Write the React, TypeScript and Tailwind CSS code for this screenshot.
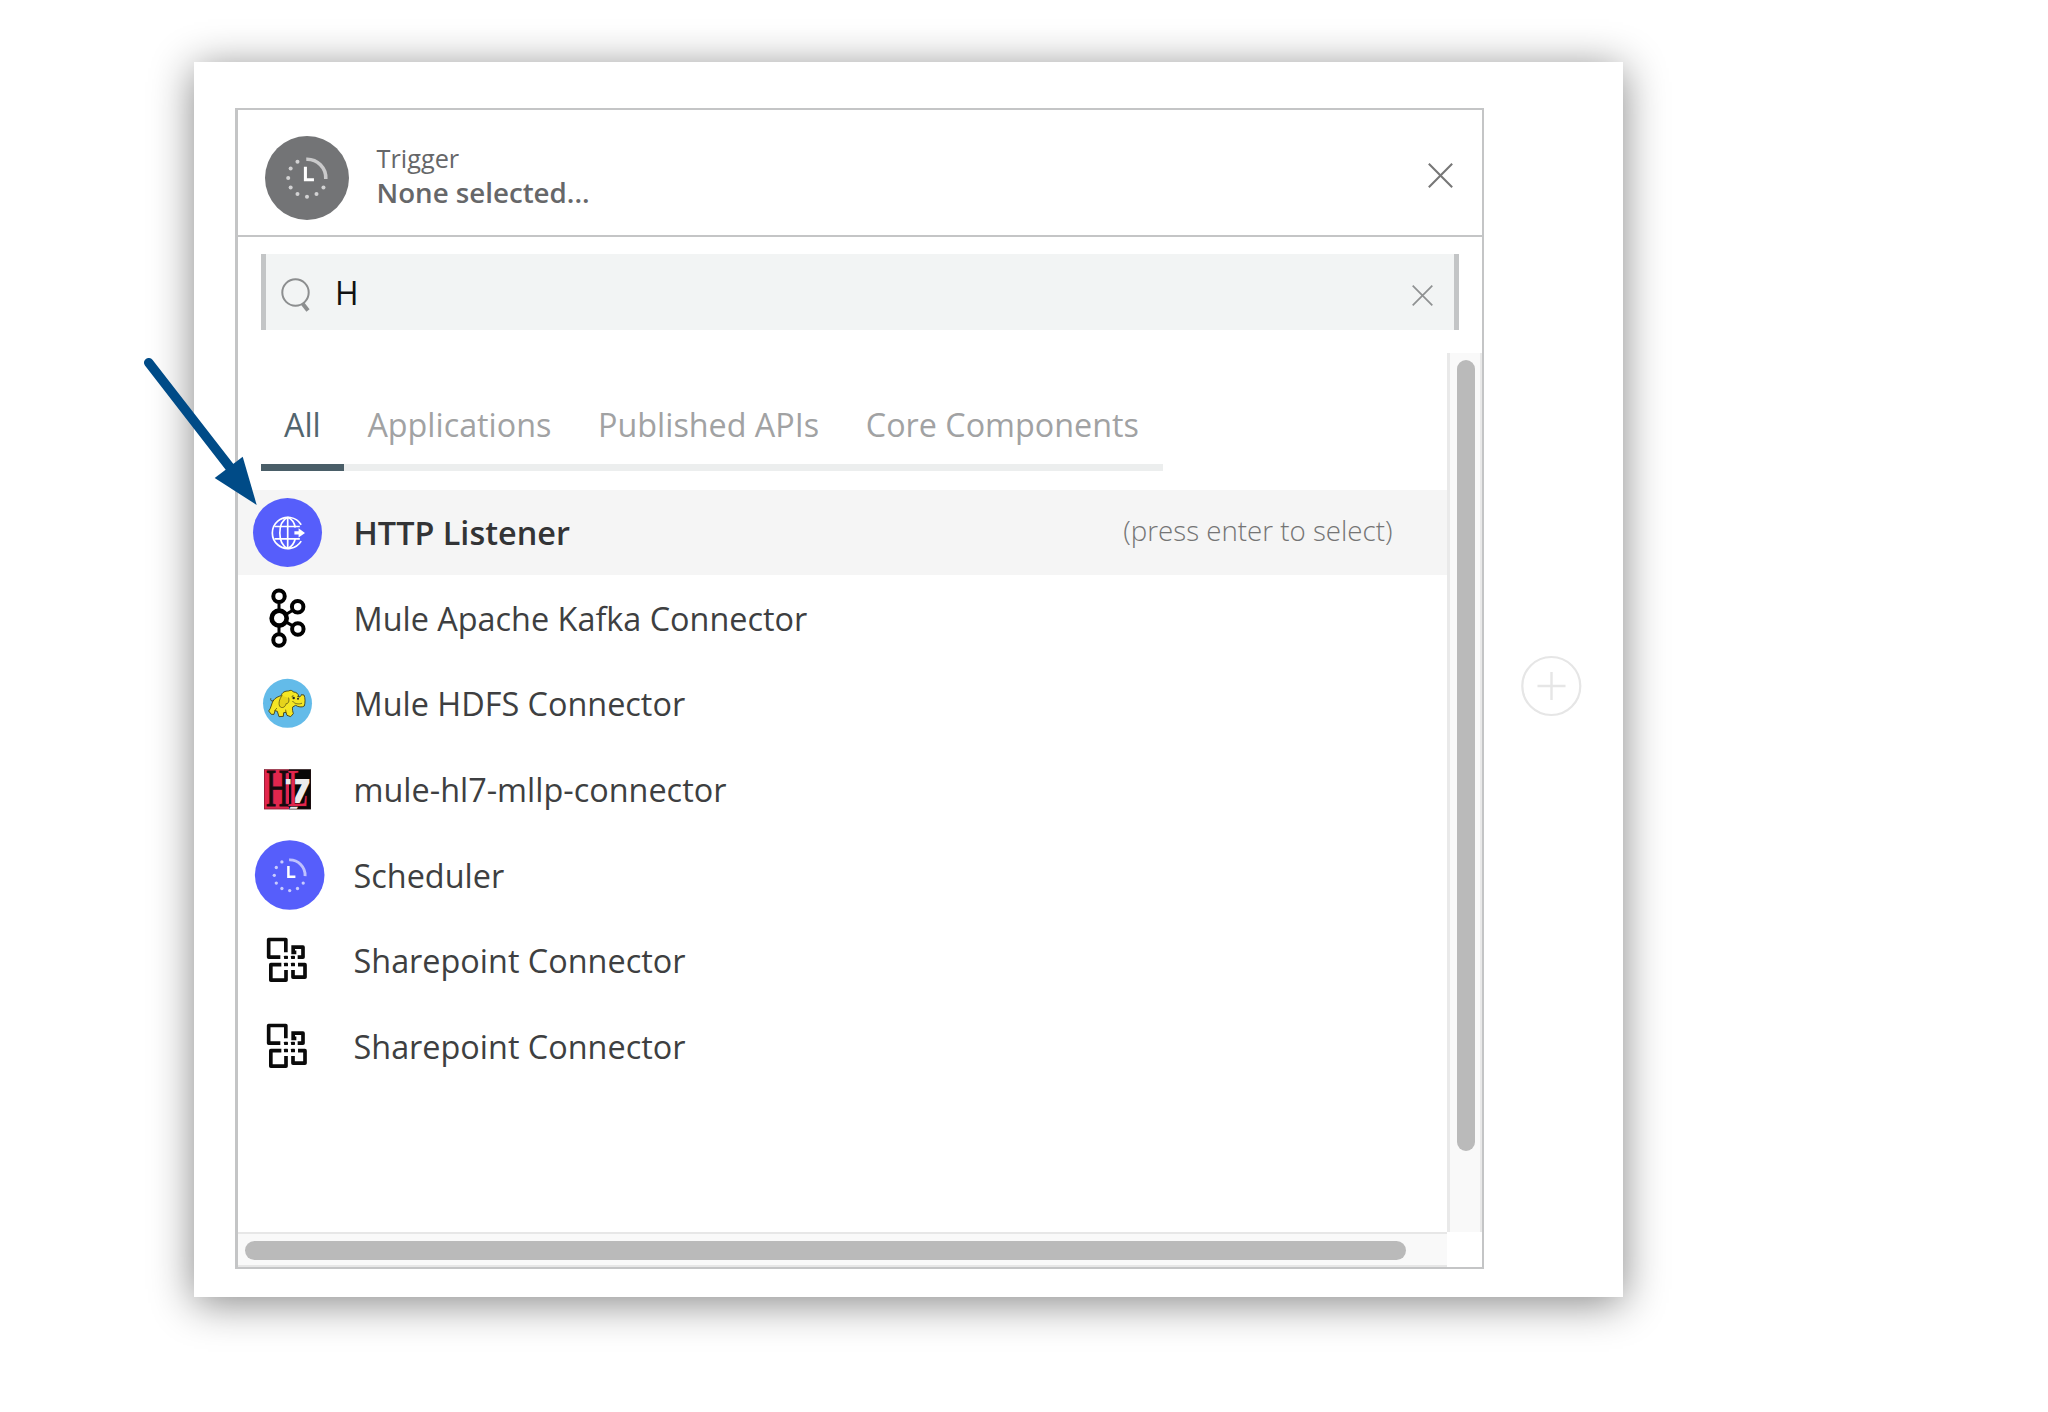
import type { ReactNode } from "react";

function CloseIcon({ size, className }: { size: number; className: string }) {
  return (
    <svg width={size} height={size} viewBox="0 0 24 24" fill="none" stroke="currentColor" className={className}>
      <path d="M0.8 0.8 23.2 23.2M23.2 0.8 0.8 23.2" strokeWidth="2" />
    </svg>
  );
}

// 12 o'clock to 3 o'clock is a solid arc, the other hours are dots.
const HOUR_DOTS = [
  [13.5, 7.8], [7.8, 13.2], [0, 15.3], [-7.8, 13.2], [-13.4, 7.8], [-15.4, 0], [-13.4, -7.8], [-7.8, -13.4],
];

function ClockGlyph({ cx, cy, scale }: { cx: number; cy: number; scale: number }) {
  return (
    <g transform={`translate(${cx} ${cy}) scale(${scale})`}>
      <path d="M-0.6 -15.4A15.4 15.4 0 0 1 15.4 0.8" fill="none" stroke="#fff" strokeOpacity="0.62" strokeWidth="2.9" />
      {HOUR_DOTS.map(([x, y]) => (
        <circle key={`${x}:${y}`} cx={x} cy={y} r="1.65" fill="#fff" fillOpacity="0.68" />
      ))}
      <path d="M-1.3 -9.3V1.4H5.7" fill="none" stroke="#fff" strokeWidth="2.5" />
    </g>
  );
}

function HttpIcon() {
  return (
    <svg width="80" height="80" viewBox="0 0 80 80" fill="none">
      <g transform="translate(0 -0.5)">
        <circle cx="39.5" cy="40" r="34.5" fill="#565efb" />
        <g stroke="#fff" strokeWidth="1.7">
          <path d="M53.2 32.2A15.6 15.6 0 1 0 53.2 48.6" />
          <path d="M39.7 24.6V56.2M26.5 34H51.8M26.5 46.4H51.8" />
          <path d="M39.7 24.8C29.2 30 29.2 51 39.7 56M39.7 24.8C43.8 26.6 46.4 30.6 47.3 35M47.3 46C46.4 50.4 43.8 54.2 39.7 56" />
        </g>
        <path d="M46.4 38.8H50.6V35.8L57 40.4 50.6 45V42H46.4Z" fill="#fff" />
      </g>
    </svg>
  );
}

function KafkaIcon() {
  return (
    <svg width="80" height="80" viewBox="0 0 80 80" fill="none">
      <g transform="translate(-8 -8) scale(0.33333)" stroke="#000">
        <path d="M117 100V118M117 168V190M140 132 156 122M140 157 156 166" strokeWidth="9" />
        <g strokeWidth="12">
          <circle cx="117" cy="78.5" r="17.2" />
          <circle cx="117" cy="210" r="17.2" />
          <circle cx="173" cy="110.5" r="17.2" />
          <circle cx="173.500" cy="177" r="17.2" />
        </g>
        <circle cx="117.5" cy="144.500" r="22.5" strokeWidth="14" />
      </g>
    </svg>
  );
}

function HdfsIcon() {
  return (
    <svg width="80" height="80" viewBox="0 0 80 80" fill="none">
      <g transform="translate(-8 -93) scale(0.33333)">
        <circle cx="142.500" cy="400" r="73.5" fill="#63bbe9" />
        <g stroke="#3d3a12" strokeWidth="2.6" strokeLinejoin="round" strokeLinecap="round">
          <path d="M102 394C96 396 90 391 92 386" />
          <path
            d="M100 391C106 383 116 379 124 377C126 366 136 363 145 363C153 359 158 362 160 366C169 366 175 371 176 379C180 382 183 379 184 374L192 375C196 383 196 398 193 408C186 413 174 411 167 406L158 411C156 419 159 425 160 431L152 440L141 436L138 427L131 428L130 439L117 440L112 424L105 422L102 433L94 433L86 423C93 416 94 401 100 391Z"
            fill="#f5e624"
          />
          <path d="M126 377C117 387 114 405 121 411C129 416 137 409 138 401C145 402 149 393 146 384" fill="#e6d31c" strokeWidth="2" />
          <path d="M158 394C164 402 176 404 185 400M104 422 110 415M138 427 137 420" strokeWidth="2" />
        </g>
        <path d="M155 380 160 377M172 379 178 381" stroke="#222" strokeWidth="2.5" />
        <circle cx="161" cy="384" r="3.6" fill="#222" />
        <circle cx="174" cy="386" r="3" fill="#222" />
      </g>
    </svg>
  );
}

function Hl7Icon() {
  return (
    <svg width="80" height="80" viewBox="0 0 80 80">
      <g transform="translate(-8 1.3) scale(0.33333)">
        <rect x="72" y="57" width="76" height="120" fill="#e2264d" />
        <rect x="147" y="57" width="66" height="120" fill="#080808" />
        <text transform="translate(133 176) scale(1.15 1)" fontFamily="Open Sans, sans-serif" fontWeight="700" fontSize="121" fill="#ececec">7</text>
        <text transform="translate(78 168) scale(0.6 1)" fontFamily="Liberation Serif, serif" fontSize="158" fill="#160a0d" stroke="#160a0d" strokeWidth="3">H</text>
        <text transform="translate(142 168) scale(0.66 1)" fontFamily="Liberation Serif, serif" fontSize="158" fill="#e2264d" stroke="#2a0a12" strokeWidth="5" paintOrder="stroke">L</text>
        <rect x="73" y="58" width="139" height="118" fill="none" stroke="#3a1a20" strokeWidth="2" strokeOpacity="0.6" />
      </g>
    </svg>
  );
}

function SchedulerIcon() {
  return (
    <svg width="80" height="80" viewBox="0 0 80 80">
      <circle cx="41.7" cy="40" r="34.8" fill="#565efb" />
      <ClockGlyph cx={41.7} cy={40.300} scale={1} />
    </svg>
  );
}

function SharepointIcon() {
  return (
    <svg width="80" height="80" viewBox="0 0 80 80" fill="none">
      <g transform="translate(-8 0) scale(0.33333)">
        <g stroke="#0a0a0a" strokeWidth="11" strokeLinejoin="round">
          <path d="M121 111.500H86V58.500H137.500V97" />
          <path d="M154 81.500H189V111.500H173M159.500 81.500V98M154 97H169" />
          <path d="M124 134H92.500V180.500H138V150" />
          <path d="M159 150V171.500H195V134H174" />
        </g>
        <g fill="#0a0a0a">
          <rect x="132" y="107" width="12" height="10" rx="2" />
          <rect x="153" y="107" width="12" height="10" rx="2" />
          <rect x="132" y="128" width="12" height="11" rx="2" />
          <rect x="153" y="128" width="12" height="11" rx="2" />
        </g>
      </g>
    </svg>
  );
}

const TABS = ["All", "Applications", "Published APIs", "Core Components"];

const RESULTS: { name: string; icon: ReactNode }[] = [
  { name: "HTTP Listener", icon: <HttpIcon /> },
  { name: "Mule Apache Kafka Connector", icon: <KafkaIcon /> },
  { name: "Mule HDFS Connector", icon: <HdfsIcon /> },
  { name: "mule-hl7-mllp-connector", icon: <Hl7Icon /> },
  { name: "Scheduler", icon: <SchedulerIcon /> },
  { name: "Sharepoint Connector", icon: <SharepointIcon /> },
  { name: "Sharepoint Connector", icon: <SharepointIcon /> },
];

function ResultRow({ name, icon, active }: { name: string; icon: ReactNode; active: boolean }) {
  return (
    <li className={`flex items-center pl-[10px] pr-[54.500px] ${active ? "h-[85px] bg-[#f5f5f5]" : "h-[85.6px]"}`}>
      <span className="shrink-0">{icon}</span>
      <span
        className={`ml-[25.500px] grow whitespace-nowrap text-[32.4px] leading-10 ${
          active ? "pb-px font-semibold text-[#333436]" : "text-[#3e3f41]"
        }`}
      >
        {name}
      </span>
      {active && (
        <span className="whitespace-nowrap pb-[6px] text-[27.7px] font-light leading-10 text-[#747474]">
          (press enter to select)
        </span>
      )}
    </li>
  );
}

function TriggerPanel() {
  return (
    <section className="ml-[41px] mt-[46px] flex h-[1161px] w-[1249px] shrink-0 flex-col border-2 border-l-[3px] border-[#c4c5c6]">
      <header className="flex h-[127px] shrink-0 items-center border-b-2 border-[#c4c5c6] pl-[27px] pr-[29px]">
        <svg width="84" height="84" viewBox="0 0 84 84" className="mt-[10px]">
          <circle cx="42" cy="42" r="42" fill="#737476" />
          <ClockGlyph cx={42} cy={42} scale={1.22} />
        </svg>
        <div className="ml-[27.500px] mt-1 grow text-[#666769]">
          <div className="text-[25.300px] leading-[34px]">Trigger</div>
          <div className="text-[27.700px] font-semibold leading-[34px]">None selected...</div>
        </div>
        <CloseIcon size={25} className="mt-[5px] text-[#777]" />
      </header>

      <div className="ml-[23px] mt-[17px] flex h-[76px] w-[1198px] shrink-0 items-center border-x-[5px] border-[#c3c5c6] bg-[#f2f4f4] pl-[15px] pr-[21px]">
        <svg width="30" height="34" viewBox="0 0 30 34" fill="none" stroke="#8c8e8f" className="mt-[6px]">
          <circle cx="14.500" cy="14.500" r="13.2" strokeWidth="2" />
          <path d="M21.5 25.5 27 32.500" strokeWidth="4" />
        </svg>
        <span className="ml-6 grow pt-[2px] text-[32px] leading-10 text-[#111]">H</span>
        <CloseIcon size={21} className="mt-1.5 text-[#8f9192]" />
      </div>

      <div className="mt-[23px] flex grow">
        <div className="flex w-[1209px] flex-col">
          <nav className="ml-[23px] mt-[43px] flex w-[902px]">
            {TABS.map((tab, i) => (
              <span
                key={tab}
                className={`h-[75px] whitespace-nowrap border-b-[7px] pl-[23px] pr-[23.700px] pt-[8px] text-[32.300px] leading-10 ${
                  i === 0 ? "border-[#4a5e68] text-[#52656e]" : "border-[#eceeee] text-[#a1a2a3]"
                }`}
              >
                {tab}
              </span>
            ))}
          </nav>
          <ul className="mt-[19px] grow">
            {RESULTS.map((r, i) => (
              <ResultRow key={i} name={r.name} icon={r.icon} active={i === 0} />
            ))}
          </ul>
          <div className="h-[35px] shrink-0 border-y-2 border-[#e7e7e7] bg-[#f9f9f9] pl-[7px] pt-[7px]">
            <div className="h-[19px] w-[1161px] rounded-full bg-[#bababa]" />
          </div>
        </div>
        <div className="h-[879px] w-[35px] border-x-2 border-l-[3px] border-[#e9e9e9] bg-[#f9f9f9] pl-[7px] pt-[7px]">
          <div className="h-[791px] w-[18px] rounded-full bg-[#bababa]" />
        </div>
      </div>
    </section>
  );
}

export default function App() {
  return (
    <main className="relative h-[1412px] w-[2048px] overflow-hidden bg-white pl-[194px] pt-[62px] font-['Open_Sans',sans-serif]">
      <div className="flex h-[1235px] w-[1429px] bg-white shadow-[0_6px_40px_rgba(0,0,0,0.48)]">
        <TriggerPanel />
        <svg width="62" height="62" viewBox="0 0 62 62" fill="none" stroke="#e6e6e6" className="ml-[36px] mt-[593px] shrink-0">
          <circle cx="31.3" cy="31" r="29" strokeWidth="2.2" />
          <path d="M31.500 17V45M17.500 31H45.500" strokeWidth="2.4" />
        </svg>
      </div>

      <svg width="130" height="160" viewBox="0 0 130 160" className="absolute left-[136px] top-[350px]">
        <path d="M12.700 12.700 96 120" stroke="#004b87" strokeWidth="9.500" strokeLinecap="round" />
        <path d="M106.700 106.700 120.700 155 78.700 128Z" fill="#004b87" />
      </svg>
    </main>
  );
}
